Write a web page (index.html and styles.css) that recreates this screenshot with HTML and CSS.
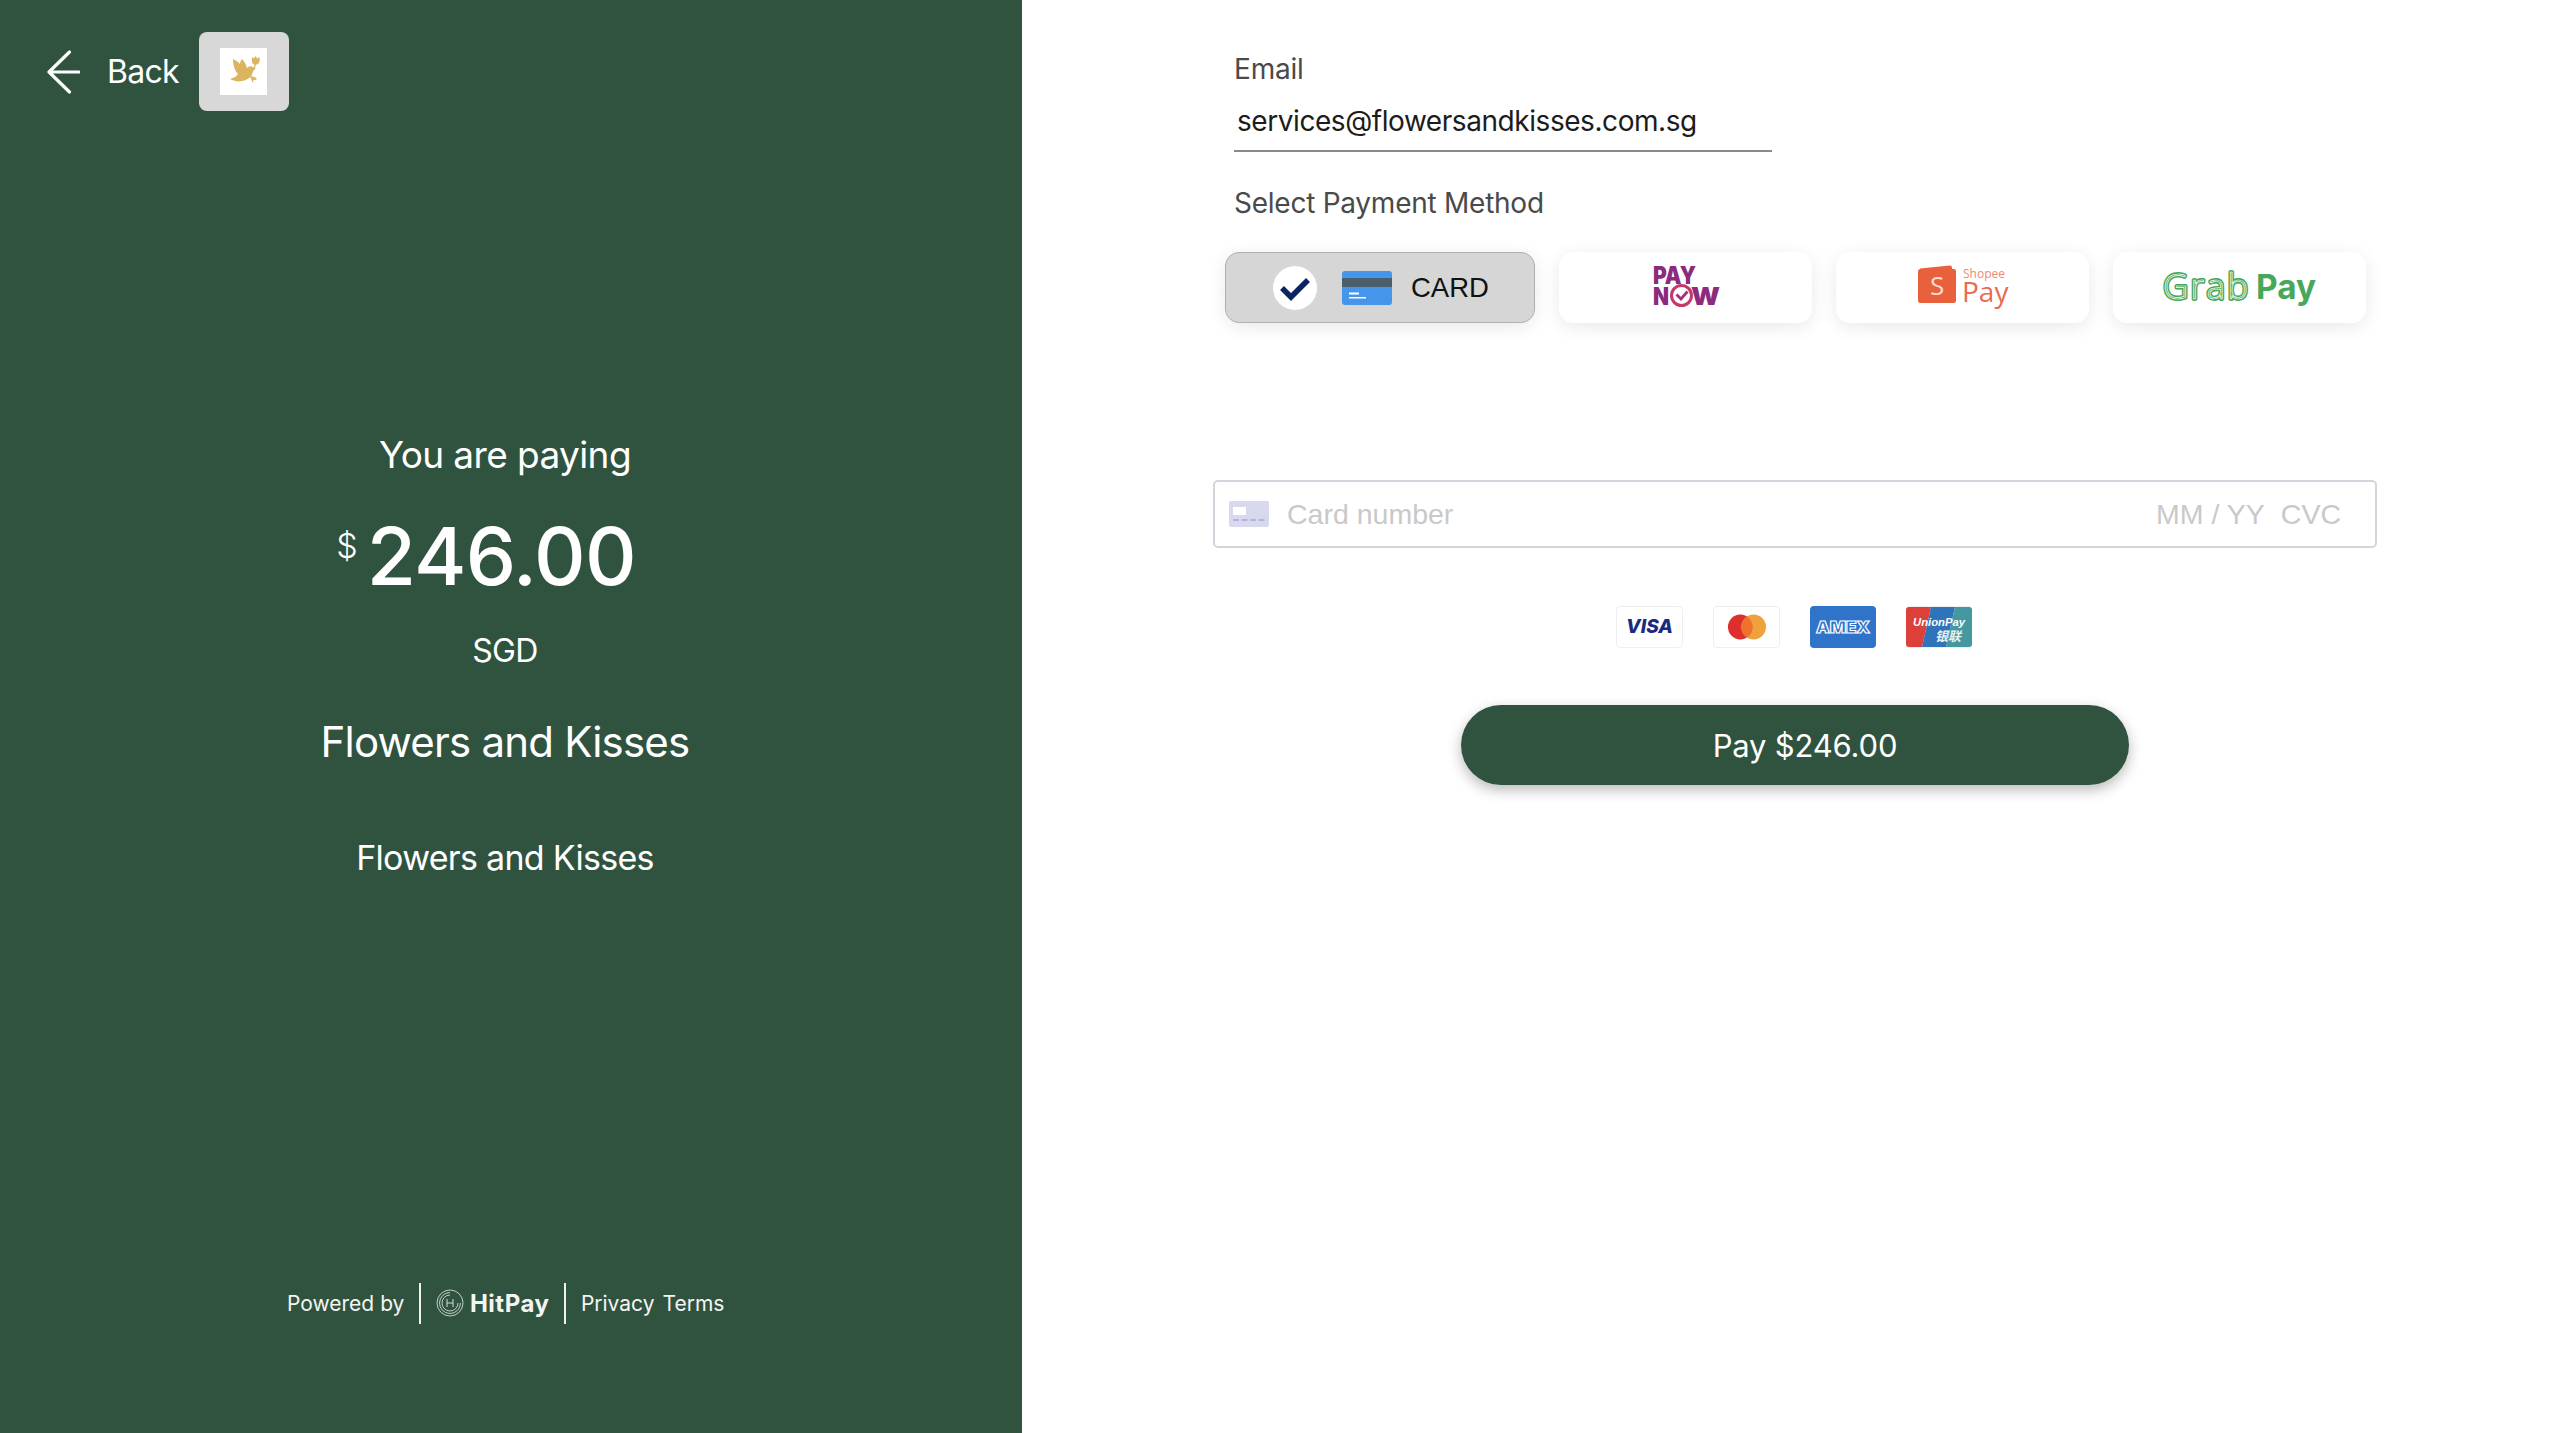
FILE: index.html
```html
<!DOCTYPE html>
<html lang="en">
<head>
<meta charset="utf-8">
<title>Checkout</title>
<link rel="stylesheet" href="styles.css">
</head>
<body>
<div class="page">
  <aside class="side">
    <header class="top">
      <a class="back">
        <svg class="arrow" viewBox="0 0 34 44"><path d="M23.500 2 3 22l20.500 20M3 22h30" fill="none" stroke="#fff" stroke-width="3.200" stroke-linecap="round" stroke-linejoin="round"/></svg>
        <span>Back</span>
      </a>
      <div class="logo-box">
        <div class="logo-inner">
          <svg viewBox="0 0 47 47" class="bird"><path fill="#dcb45f" d="M10 31C14 30 17 28 18 26 15 23 13 17 13 11 16 12 18 14 20 16 20 14 21 12 22 11 25 14 26 17 27 20 29 18 31 18 33 19L36 21 33 22C33 27 29 32 22 33 18 34 14 33 10 31Z"/><path fill="none" stroke="#dcb45f" stroke-width="1.300" d="M35.500 16C35 20 32 24 30 27 31 29 32 31 33 34M31 29C33 29 35 29 36 31 34 32 32 31 31 29Z"/><path fill="#dcb45f" d="M32 9l2 1.500L35.500 8 37 10.500 39.500 9C40 12 39.500 15 38 16 36.500 17 34 17 33 16 32 14.500 31.800 12 32 9Z"/></svg>
        </div>
      </div>
    </header>
    <section class="summary">
      <p class="paying">You are paying</p>
      <p class="amount"><span class="currency">$</span><span class="value">246.00</span></p>
      <p class="code">SGD</p>
      <h1 class="merchant">Flowers and Kisses</h1>
      <p class="desc">Flowers and Kisses</p>
    </section>
    <footer class="foot">
      <span>Powered by</span>
      <i class="rule"></i>
      <span class="brand">
        <svg class="hit-icon" viewBox="0 0 28 28"><circle cx="14" cy="14" r="13" fill="none" stroke="#e6ebe8" stroke-width=".8"/><path d="M14 3.500A10.500 10.500 0 1 0 24.500 14" fill="none" stroke="#e6ebe8" stroke-width=".8"/><path d="M14 6A8 8 0 1 0 22 14" fill="none" stroke="#e6ebe8" stroke-width=".8"/><path d="M11 10v8M17 10v8M11 14h6" fill="none" stroke="#e6ebe8" stroke-width=".9"/></svg>
        <b>HitPay</b>
      </span>
      <i class="rule"></i>
      <span class="links"><span>Privacy</span><span>Terms</span></span>
    </footer>
  </aside>
  <main class="main">
    <div class="email">
      <label class="label">Email</label>
      <div class="email-value">services@flowersandkisses.com.sg</div>
    </div>
    <div class="label select-label">Select Payment Method</div>
    <div class="methods">
      <button class="method method-card">
        <span class="tick"><svg viewBox="0 0 44 44"><path d="M9 22l9 9 17-17" fill="none" stroke="#0c2461" stroke-width="5.500"/></svg></span>
        <svg class="card-glyph" viewBox="0 0 50 34"><rect width="50" height="34" rx="3" fill="#4595ea"/><rect y="7" width="50" height="9" fill="#4a5e6d"/><rect x="7" y="21.500" width="10" height="2" fill="#fff"/><rect x="7" y="26" width="17" height="1.500" fill="#fff"/></svg>
        <span>CARD</span>
      </button>
      <button class="method">
        <svg class="paynow" viewBox="0 0 72 60">
          <text x="3" y="25.500" class="pn-text" textLength="43" lengthAdjust="spacingAndGlyphs">PAY</text>
          <text x="3" y="47" class="pn-text" textLength="16" lengthAdjust="spacingAndGlyphs">N</text>
          <circle cx="31.500" cy="37.500" r="10" fill="none" stroke="#c5386c" stroke-width="3"/>
          <path d="M26.500 36.500l4.500 4.500 6.500-7.500" fill="none" stroke="#a82d76" stroke-width="2.800"/>
          <text x="41" y="47" class="pn-text" textLength="29" lengthAdjust="spacingAndGlyphs">W</text>
        </svg>
      </button>
      <button class="method">
        <svg class="shopee" viewBox="0 0 92 60">
          <path d="M3 10.500 33 7.500a2 2 0 0 1 2 2V12H3z" fill="#e8603c"/>
          <rect x="1" y="11" width="38" height="34" rx="2.500" fill="#e8603c"/>
          <text x="13" y="37" class="sp-s">S</text>
          <text x="46" y="20" class="sp-small">Shopee</text>
          <text x="45" y="43.500" class="sp-pay">Pay</text>
        </svg>
      </button>
      <button class="method">
        <svg class="grab" viewBox="0 0 156 60">
          <text x="1" y="40.500" class="gr-grab" textLength="85">Grab</text>
          <text x="1" y="40.500" class="gr-grab-line" textLength="85" aria-hidden="true">Grab</text>
          <text x="94" y="40.500" class="gr-pay" textLength="60" lengthAdjust="spacingAndGlyphs">Pay</text>
        </svg>
      </button>
    </div>
    <div class="card-field">
      <svg class="field-icon" viewBox="0 0 40 26"><rect width="40" height="26" rx="2" fill="#d9d9ee"/><rect x="4" y="6" width="13" height="8" fill="#fff"/><path d="M4 19h32" stroke="#b3b3dc" stroke-width="2" stroke-dasharray="6 2.500"/></svg>
      <span class="ph ph-number">Card number</span>
      <span class="ph">MM / YY</span>
      <span class="ph ph-cvc">CVC</span>
    </div>
    <div class="brands">
      <div class="brand-card">
        <svg viewBox="0 0 67 42"><text x="33.500" y="27.500" class="visa">VISA</text></svg>
      </div>
      <div class="brand-card">
        <svg viewBox="0 0 67 42"><circle cx="27" cy="21" r="13" fill="#dd2f2c"/><circle cx="41" cy="21" r="13" fill="#eea23d"/><path d="M34 10a13 13 0 0 1 0 22 13 13 0 0 1 0-22z" fill="#f0702c"/></svg>
      </div>
      <div class="brand-flat brand-amex">
        <svg viewBox="0 0 66 42"><text x="6" y="27" class="amex" textLength="54" lengthAdjust="spacingAndGlyphs">AMEX</text></svg>
      </div>
      <div class="brand-flat brand-union">
        <svg viewBox="0 0 66 42">
          <path d="M3 1h22L16 41H3a3 3 0 0 1-3-3V4a3 3 0 0 1 3-3z" fill="#dd4039"/>
          <path d="M25 1h24l-9 40H16z" fill="#2f74b9"/>
          <path d="M49 1h14a3 3 0 0 1 3 3v34a3 3 0 0 1-3 3H40z" fill="#45989f"/>
          <text x="33" y="20" class="up-a" textLength="52" lengthAdjust="spacingAndGlyphs">UnionPay</text>
          <text x="42" y="35" class="up-b">银联</text>
        </svg>
      </div>
    </div>
    <button class="pay">Pay $246.00</button>
  </main>
</div>
</body>
</html>
```
FILE: styles.css
```css
* { box-sizing: border-box; }
html, body { margin: 0; padding: 0; background: #fff; }
body { font-family: Inter, "Liberation Sans", sans-serif; }
p, h1 { margin: 0; font-weight: 400; }
.page { display: flex; height: 1433px; overflow: hidden; }

.side { width: 1022px; flex: none; background: #30533f; color: #fff; display: flex; flex-direction: column; }
.top { display: flex; align-items: center; padding: 32px 0 0 46px; height: 111px; }
.back { display: flex; align-items: center; gap: 27px; font-size: 32px; line-height: 40px; letter-spacing: -.7px; }
.arrow { width: 34px; height: 44px; display: block; }
.logo-box { width: 90px; height: 79px; margin-left: 20px; background: #d8d8d8; border-radius: 8px; display: flex; align-items: center; justify-content: center; }
.logo-inner { width: 47px; height: 47px; background: #fff; }
.bird { width: 47px; height: 47px; display: block; }

.summary { width: 1010px; display: flex; flex-direction: column; align-items: center; padding-top: 319px; }
.paying { font-size: 37px; line-height: 50px; letter-spacing: -.6px; }
.amount { display: flex; align-items: flex-start; margin: 26px 38px 0 0; height: 100px; }
.currency { font-size: 34px; line-height: 40px; margin-top: 20px; margin-right: 9px; font-weight: 300; }
.value { font-size: 80px; line-height: 100px; font-weight: 500; letter-spacing: -.8px; }
.code { font-size: 32px; line-height: 40px; margin-top: 25px; letter-spacing: -.6px; }
.merchant { font-size: 42px; line-height: 50px; margin-top: 46px; letter-spacing: -.8px; }
.desc { font-size: 34px; line-height: 44px; margin-top: 69px; letter-spacing: -.7px; }

.foot { margin-top: auto; margin-bottom: 110px; margin-left: 287px; display: flex; align-items: center; height: 40px; font-size: 21px; color: #f3f5f4; }
.rule { width: 1.500px; height: 41px; background: #eef1ef; margin: 0 15px; }
.brand { display: flex; align-items: center; gap: 6px; }
.hit-icon { width: 28px; height: 28px; }
.brand b { font-size: 24px; font-weight: 700; letter-spacing: .5px; }
.links { display: flex; gap: 8px; }

.main { flex: 1; padding: 51px 0 0 191px; }
.label { font-size: 28px; line-height: 36px; color: #4a4a4a; letter-spacing: -.2px; }
.email { margin-left: 21px; width: 538px; border-bottom: 2px solid #8a8a8a; height: 101px; }
.email-value { font-size: 28px; line-height: 40px; color: #1c1c1c; padding-left: 3px; margin-top: 14px; letter-spacing: -.44px; }
.select-label { margin: 33px 0 0 21px; letter-spacing: -.25px; }
.methods { display: flex; gap: 24px; margin: 31px 0 0 12px; }
.method { width: 253px; height: 71px; border: 0; padding: 0; background: #fff; border-radius: 14px; box-shadow: 0 4px 18px rgba(0,0,0,.09); display: flex; align-items: center; justify-content: center; }
.method-card { width: 310px; background: #d6d6d6; border: 1.500px solid #b0b0b0; font-family: "Liberation Sans", sans-serif; font-size: 27.500px; color: #111; gap: 24px; justify-content: flex-start; padding-left: 47px; }
.tick { width: 44px; height: 44px; border-radius: 50%; background: #fff; display: block; }
.tick svg { display: block; }
.card-glyph { width: 50px; height: 34px; margin: 0 -5px 0 1px; }
.paynow { width: 72px; height: 60px; }
.pn-text { font: 900 24px Inter, sans-serif; fill: #8c2a7d; }
.shopee { width: 92px; height: 60px; }
.sp-s { font: 400 26px "Open Sans", sans-serif; fill: #fbdcd0; }
.sp-small { font: 400 12px "Open Sans", sans-serif; fill: #ef8a70; }
.sp-pay { font: 400 28px "Open Sans", sans-serif; fill: #ea6c50; }
.grab { width: 156px; height: 60px; }
.gr-grab { font: 300 35px "Open Sans", sans-serif; fill: none; stroke: #46a85b; stroke-width: 3.800px; stroke-linejoin: round; }
.gr-grab-line { font: 300 35px "Open Sans", sans-serif; fill: none; stroke: #fff; stroke-width: .7px; }
.gr-pay { font: 700 34px Inter, sans-serif; fill: #46a85b; }

.card-field { width: 1164px; height: 68px; margin-top: 157px; border: 2px solid #d0d6dc; border-radius: 5px; display: flex; align-items: center; padding: 0 34px 0 14px; font-family: "Liberation Sans", sans-serif; font-size: 28.500px; }
.field-icon { width: 40px; height: 26px; flex: none; }
.ph { color: #c9c9c9; }
.ph-number { flex: 1; margin-left: 18px; }
.ph-cvc { margin-left: 16px; }

.brands { display: flex; margin: 58px 0 0 403px; height: 42px; gap: 30px; }
.brand-card, .brand-flat { width: 67px; height: 42px; border-radius: 4px; }
.brand-card { border: 1.500px solid #eceef0; background: #fff; }
.brand-flat { width: 66px; }
.brand-card svg, .brand-flat svg { display: block; width: 100%; height: 100%; }
.brand-amex { background: #2f74c9; }
.brand-union { background: #eee; }
.visa { font: italic 800 20px Inter, sans-serif; fill: #1a2a80; text-anchor: middle; }
.amex { font: 900 16px Inter, sans-serif; fill: #2f74c9; stroke: #fff; stroke-width: 1.100px; }
.up-a { font: italic 700 10.500px "Liberation Sans", sans-serif; fill: #fff; text-anchor: middle; }
.up-b { font: italic 700 13px "Noto Sans CJK SC", sans-serif; fill: #e8f2f2; text-anchor: middle; }

.pay { display: block; width: 668px; height: 80px; margin: 57px 0 0 248px; border: 0; border-radius: 40px; background: #30533f; color: #fff; font: 400 31px Inter, sans-serif; letter-spacing: -.2px; padding-left: 26px; box-shadow: 0 5px 14px rgba(0,0,0,.28); }
```
